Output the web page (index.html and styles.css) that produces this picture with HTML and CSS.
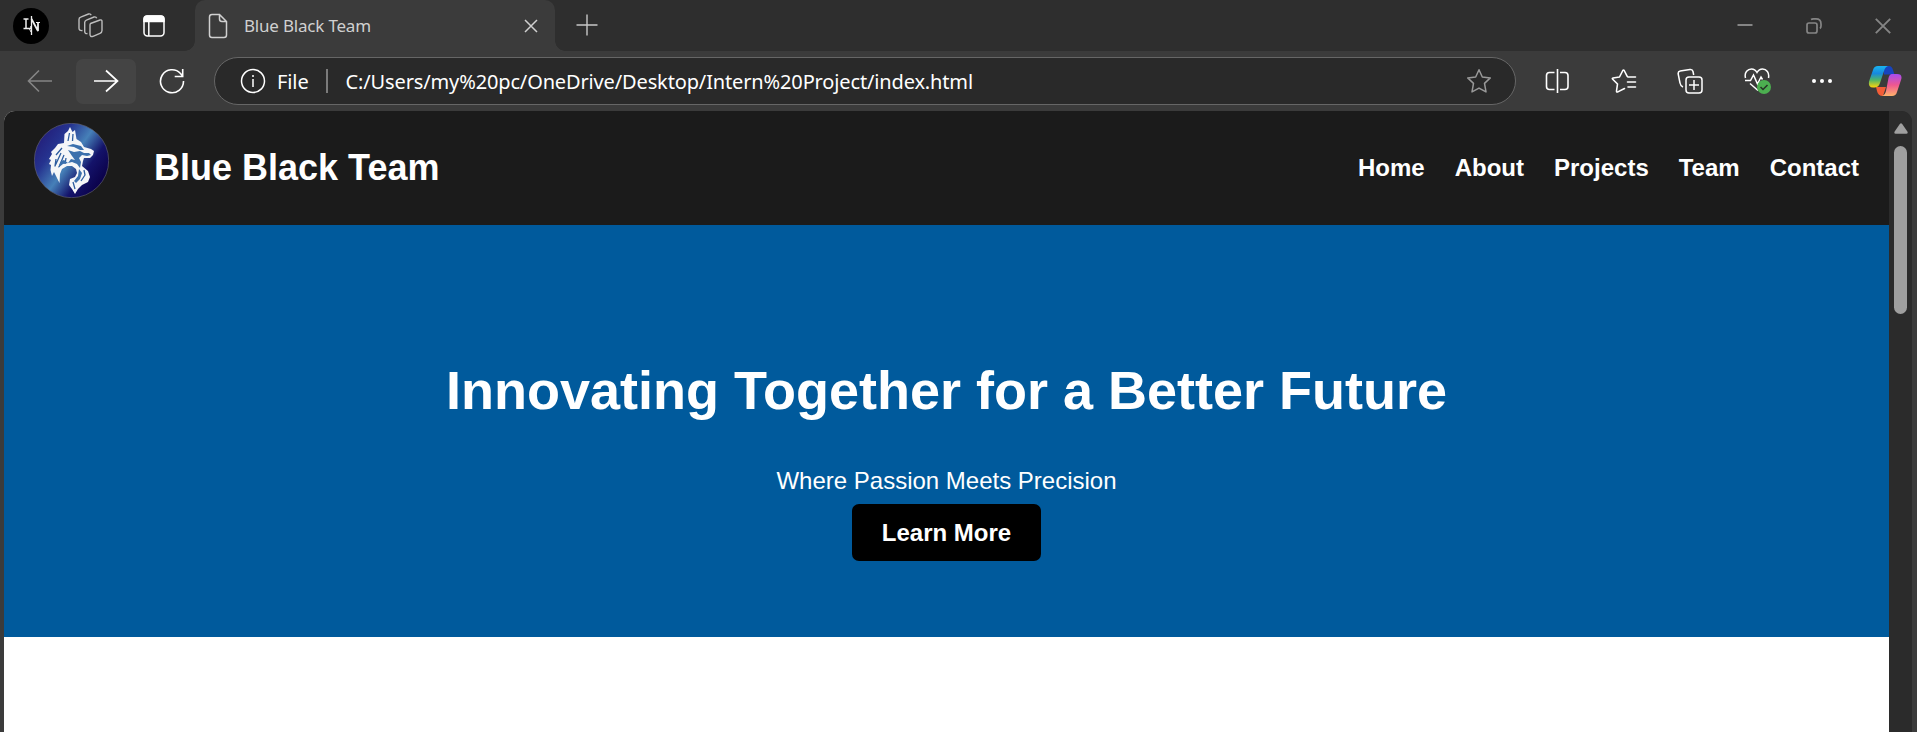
FILE: index.html
```html
<!DOCTYPE html>
<html lang="en">
<head>
<meta charset="utf-8">
<title>Blue Black Team</title>
<link rel="stylesheet" href="styles.css">
</head>
<body>
<div class="tabs">
  <div class="avatar"><svg width="36" height="36" viewBox="0 0 36 36" fill="none" stroke="#eee"><path d="M10.500 11h5M13 11v9.500M10.500 20.500h7.500v-2.500" stroke-width="1.500"/><path d="M18.500 8v19" stroke-width="1.300"/><path d="M18.500 11l6.500 12v-9" stroke-width="1.800"/><path d="M23 14.500h4M16 20l2 4" stroke-width="1"/></svg></div>
  <svg class="workspaces" width="26" height="26" viewBox="0 0 26 26" fill="none" stroke="#bdbdbd" stroke-width="1.400"><path d="M12.500 10.500 22 7q2-.5 2 1.500v9q0 2-2 2.800l-7 3q-3 1-3-2v-9q0-1.200.5-1.800z"/><path d="M9.500 20.500q-2.800.5-2.800-2.200V9.500q0-1.800 1.700-2.400L16 4q2-.6 2.700 1.300M4.500 17.500Q1 18 1 15.300V6.500q0-1.700 1.700-2.300L10.500 1q2-.6 2.700 1.300"/></svg>
  <svg class="tabicon" width="22" height="22" viewBox="0 0 22 22" fill="none" stroke="#fff" stroke-width="1.500"><rect x="1" y="1" width="20" height="20" rx="3.500"/><path d="M1 6.500V4q0-3 3-3h14q3 0 3 3v2.500z" fill="#fff"/><path d="M5.800 7v14"/></svg>
  <div class="tab">
    <svg class="page-icon" width="20" height="26" viewBox="0 0 20 26" fill="none" stroke="#d0d0d0" stroke-width="1.500"><path d="M4 1.500h7.500l7 7V22q0 2.500-2.500 2.500H4Q1.500 24.500 1.500 22V4Q1.500 1.500 4 1.500zM11.500 1.500V6q0 2.500 2.500 2.500h4.500"/></svg>
    <span class="tab-title">Blue Black Team</span>
    <svg class="tab-close" width="14" height="14" viewBox="0 0 14 14" stroke="#d0d0d0" stroke-width="1.500"><path d="M1 1l12 12M13 1 1 13"/></svg>
  </div>
  <svg class="plus" width="22" height="22" viewBox="0 0 22 22" stroke="#c8c8c8" stroke-width="1.400"><path d="M11 .5v21M.5 11h21"/></svg>
  <div class="window-buttons">
    <svg width="16" height="16" viewBox="0 0 16 16" stroke="#858585" stroke-width="2"><path d="M.5 7h15"/></svg>
    <svg width="16" height="16" viewBox="0 0 16 16" fill="none" stroke="#858585" stroke-width="1.700"><rect x="1" y="5" width="10" height="10" rx="2"/><path d="M5 1.500q1-.6 2.500-.6h2.500q5 0 5 5V8q0 1.700-1 2.500"/></svg>
    <svg width="16" height="16" viewBox="0 0 16 16" stroke="#858585" stroke-width="1.900"><path d="M.8.8l14.400 14.400M15.200.8.800 15.200"/></svg>
  </div>
</div>
<div class="toolbar">
  <svg class="back" width="26" height="24" viewBox="0 0 26 24" fill="none" stroke="#858585" stroke-width="1.600"><path d="M25 12H1.500M12 1.500 1.500 12 12 22.500"/></svg>
  <div class="forward"><svg width="26" height="24" viewBox="0 0 26 24" fill="none" stroke="#fff" stroke-width="1.700"><path d="M1 12h23.500M13 1.500 24.500 12 13 22.500"/></svg></div>
  <svg class="reload" width="26" height="26" viewBox="0 0 26 26" fill="none" stroke="#fff" stroke-width="1.600"><path d="M24.500 13A11.500 11.500 0 1 1 21.500 5.500L23.500 8M23.700 1v7.500h-8"/></svg>
  <div class="address">
    <svg class="info" width="26" height="26" viewBox="0 0 26 26" fill="none" stroke="#fff" stroke-width="1.500"><circle cx="13" cy="13" r="11.500"/><path d="M13 11v8M13 7v2"/></svg>
    <span class="scheme">File</span><span class="divider"></span>
    <span class="url">C:/Users/my%20pc/OneDrive/Desktop/Intern%20Project/index.html</span>
    <svg class="star" width="26" height="26" viewBox="0 0 26 26" fill="none" stroke="#999" stroke-width="1.500" stroke-linejoin="round"><path d="M13 1.800 16.300 9l8 .9-5.800 5.500 1.500 8.500-7-3.800-7 3.800 1.500-8.500L1.700 9.900l8-.9z"/></svg>
  </div>
  <div class="actions">
    <svg width="26" height="26" viewBox="0 0 26 26" fill="none" stroke="#fff" stroke-width="1.600"><path d="M13.500 1v24M10.500 4.500h-5q-3 0-3 3v11q0 3 3 3h5M16 4.500h5q3 0 3 3v11q0 3-3 3h-5"/></svg>
    <svg width="26" height="26" viewBox="0 0 26 26" fill="none" stroke="#fff" stroke-width="1.600" stroke-linejoin="round" stroke-linecap="round"><path d="M24.500 9h-7.300q-.7 0-1-.7L13.200 2.500q-.7-1-1.400 0L8.500 9l-6.500 1q-1.200.3-.3 1.200L6.500 16l-1 7q0 1.500 1.300.9L13.500 20.500M16.500 14h8M17 19h7.500"/></svg>
    <svg width="26" height="26" viewBox="0 0 26 26" fill="none" stroke="#fff" stroke-width="1.500"><rect x="9" y="9" width="16" height="16" rx="3"/><path d="M17 12v10M12 17h10M6 19Q3.500 18 3 15L1.200 6q-.4-2.500 2-3L13 1.500q2.500-.3 3 2l.7 3.500"/></svg>
    <svg width="28" height="28" viewBox="0 0 28 28" fill="none" stroke="#fff" stroke-width="1.500"><path d="M1.500 11C0 5 4 2 7.500 2q3.500 0 5.500 3.500Q15 2 18.500 2c4 0 7 3.500 6 9M1 13.500h5.500l3-5.500 4 9 3.500-7 1.500 2.500M6 16.500l8 7"/><circle cx="20" cy="20" r="7" fill="#4caf50" stroke="none"/><path d="m16.500 20 2.500 2.500 4.500-4.500" stroke="#263326"/></svg>
    <svg width="22" height="22" viewBox="0 0 22 22" fill="#fff"><circle cx="4" cy="11" r="2"/><circle cx="12" cy="11" r="2"/><circle cx="20" cy="11" r="2"/></svg>
    <svg class="copilot" width="34" height="32" viewBox="0 0 34 32"><defs><linearGradient id="ca" x1="0" y1="0" x2="0" y2="1"><stop stop-color="#19b4f0"/><stop offset=".35" stop-color="#1689df"/><stop offset=".65" stop-color="#4fb568"/><stop offset="1" stop-color="#ffd60a"/></linearGradient><linearGradient id="cb" x1="0" y1="0" x2="0" y2="1"><stop stop-color="#a64cf0"/><stop offset=".5" stop-color="#ef5790"/><stop offset="1" stop-color="#ffb36b"/></linearGradient></defs><path d="M16 1h5q3 0 4 4l1.500 4.500H16z" fill="#1744bf"/><path d="M8 22h10l-3 9q-5 0-6-5z" fill="#f35d37"/><path d="M10 1h10q-3 1-4 5l-4 12q-1.200 4-5 4.500H5q-5 0-4-6L5 5q1-4 5-4z" fill="url(#ca)"/><path d="M24 9h5q6 0 4 6l-4 12q-1 4-5 4H14q3-1 4-5l2.500-13q1-4 3.500-4z" fill="url(#cb)"/></svg>
  </div>
</div>
<div class="viewport">
  <div class="page">
    <header class="site-header">
      <svg class="logo" width="75" height="75" viewBox="0 0 75 75"><defs><linearGradient id="lg" x1=".08" y1=".2" x2=".92" y2=".8"><stop stop-color="#23207c"/><stop offset=".22" stop-color="#25338f"/><stop offset=".49" stop-color="#4680b8"/><stop offset=".73" stop-color="#14136a"/><stop offset="1" stop-color="#0a0048"/></linearGradient></defs><circle cx="37.500" cy="37.500" r="37.200" fill="url(#lg)" stroke="#667" stroke-width=".6"/>
      <path fill="#f5f6f8" d="M30 20 30.500 11 34 8 36 4 38.500 9 41 7 42.500 16 47 19 50 24 57 26 60 28 59 32 56 35 50 35 49 38 48 43 54 48 56 54 54 59 48 62 44 66 41 71 38 66 35 62 36 56 41 54 43 50 42 46 38 43 33 43 28 46 26 51 25.500 60 22 53 20 49 18 53 16.500 47 17 42 15 41 17 37 15 36 18 31 17 29 21 25 24 21z"/>
      <path fill="none" stroke="#2c5c9e" stroke-width="1.300" stroke-linejoin="round" d="M34 18 35.500 10M38.500 18 39 11M28 25 22 32M27 30 21 43 22 36M30 32 25 44M32 35 31 41M50 47 51 52 47 58M39 59 41 66"/>
      <path fill="#3b70ad" d="M33 23 39 21 47 23 50 27 46 27 40 24zM34 27 40 29 46 28 50 30 55 30 57 32 53 33 48 32 45 35 47 39 46 45 43 41 38 39 34 40 37 36 41 37 38 33zM27 38 24 45 29 41 34 40 30 37zM45 46 48 50 46 56 42 60 40 58 44 53z"/></svg>
      <h1 class="brand">Blue Black Team</h1>
      <nav class="nav"><a>Home</a><a>About</a><a>Projects</a><a>Team</a><a>Contact</a></nav>
    </header>
    <section class="hero"><h2 class="headline">Innovating Together for a Better Future</h2><p class="tagline">Where Passion Meets Precision</p><a class="button">Learn More</a></section>
  </div>
  <div class="scrollbar"><svg width="14" height="11" viewBox="0 0 14 11"><path d="M6 .8q1-1.200 2 0l5.500 8q.7 2-1.200 2H1.700Q-.2 10.800.5 8.800z" fill="#9f9f9f"/></svg><div class="thumb"></div></div>
</div>
</body>
</html>
```
FILE: styles.css
```css
* { box-sizing: border-box; }
body { margin: 0; width: 1917px; height: 732px; overflow: hidden; background: #3b3b3b; display: flex; flex-direction: column; font-family: "Liberation Sans", Arial, sans-serif; color: #fff; }
svg { display: block; flex: none; }
.tabs { height: 51px; background: #2e2e2e; display: flex; flex: none; align-items: center; padding-left: 13px; }
.avatar { width: 36px; height: 36px; border-radius: 50%; background: #000; }
.workspaces { margin-left: 29px; }
.tabicon { margin-left: 39px; }
.tab { position: relative; height: 51px; width: 360px; margin-left: 30px; background: #3b3b3b; border-radius: 10px 10px 0 0; display: flex; align-items: center; padding: 0 17px 0 13px; }
.tab::before, .tab::after { content: ""; position: absolute; bottom: 0; width: 10px; height: 10px; }
.tab::before { left: -10px; background: radial-gradient(circle at 0 0, #2e2e2e 9.500px, #3b3b3b 10px); }
.tab::after { right: -10px; background: radial-gradient(circle at 100% 0, #2e2e2e 9.500px, #3b3b3b 10px); }
.tab-title { margin-left: 16px; font: 17px "Noto Sans", sans-serif; letter-spacing: -.2px; color: #d0d0d0; white-space: nowrap; }
.tab-close { margin-left: auto; }
.plus { margin: -2px 0 0 21px; }
.window-buttons { margin-left: auto; display: flex; gap: 53px; padding-right: 26px; }
.toolbar { height: 60px; flex: none; display: flex; align-items: center; padding-left: 27px; }
.back, .forward svg { margin-top: -1px; }
.forward { width: 60px; height: 45px; border-radius: 7px; background: #444; margin-left: 23px; display: grid; place-items: center; }
.reload { margin-left: 23px; }
.address { width: 1302px; height: 48px; margin-left: 29px; border: 1.500px solid #666; border-radius: 24px; background: #292929; display: flex; align-items: center; padding: 0 23px 0 25px; font: 20px "Noto Sans", sans-serif; }
.scheme { margin-left: 11px; letter-spacing: -.1px; }
.divider { width: 2px; height: 24px; background: #7b7b7b; margin: 0 18px 0 17px; }
.url { white-space: nowrap; letter-spacing: -.14px; }
.star { margin-left: auto; }
.actions { flex: 1; display: grid; grid-template-columns: repeat(4, 66.500px) 57.500px 34px; align-items: center; padding-left: 28px; }
.viewport { flex: 1; display: flex; margin-left: 4px; margin-right: 5px; border-radius: 11px 11px 0 0; overflow: hidden; background: #2b2b2b; }
.page { width: 1885px; background: #fff; }
.site-header { height: 114px; background: #1b1b1b; display: flex; align-items: center; padding: 0 30px; }
.logo { margin: -15px 0 0; }
.brand { margin: 0 0 0 45px; font-size: 36px; line-height: 42px; }
.nav { margin-left: auto; display: flex; gap: 30px; font-weight: bold; font-size: 24px; }
.hero { height: 412px; background: #005a9c; display: flex; flex-direction: column; align-items: center; padding-top: 134px; }
.headline { margin: 0; font-size: 54px; line-height: 63px; white-space: nowrap; }
.tagline { margin: 45px 0 0; font-size: 24px; line-height: 28px; }
.button { margin-top: 9px; width: 189px; height: 57px; border-radius: 7px; background: #000; display: grid; place-items: center; font-size: 24px; font-weight: bold; }
.scrollbar { flex: 1; display: flex; flex-direction: column; align-items: center; padding-top: 12px; background: #2b2b2b; }
.thumb { width: 13px; height: 168px; border-radius: 7px; background: #9f9f9f; margin-top: 12px; }
```
